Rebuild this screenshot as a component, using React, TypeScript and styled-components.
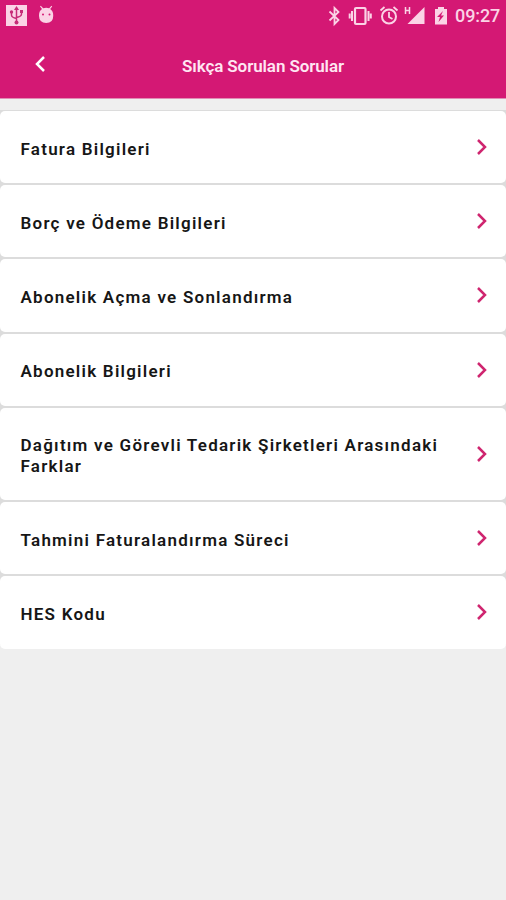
import React from "react";
import styled, { createGlobalStyle } from "styled-components";

const GlobalStyle = createGlobalStyle`
  body { margin: 0; background: #efefef; font-family: Roboto, "Liberation Sans", sans-serif; }
`;

const Screen = styled.div`
  display: flex;
  flex-direction: column;
  width: 506px;
  height: 900px;
  overflow: hidden;
  background: #efefef;
`;

const Top = styled.header`
  flex: none;
  box-sizing: border-box;
  height: 99px;
  border-bottom: 1px solid #e08db5;
  background: #d41874;
`;

const StatusBar = styled.div`
  display: flex;
  align-items: center;
  justify-content: space-between;
  height: 32px;
  color: #fbd3e6;
`;

const StatusIcons = styled.svg`
  display: block;
  flex: none;
`;

const StatusRight = styled.div`
  display: flex;
  align-items: center;
`;

const Clock = styled.span`
  width: 51px;
  font-size: 18px;
  font-weight: 500;
  line-height: 32px;
  letter-spacing: -0.1px;
  white-space: nowrap;
`;

const NavBar = styled.div`
  display: grid;
  grid-template-columns: 80px 1fr 60px;
  align-items: center;
  height: 66px;
`;

const BackButton = styled.button`
  display: flex;
  justify-content: center;
  padding: 0 0 2px;
  border: 0;
  background: none;
`;

const Title = styled.h1`
  margin: 1px 0 0;
  padding-left: 102px;
  color: #ffe6f2;
  font-size: 17px;
  font-weight: 600;
  line-height: 24px;
  letter-spacing: -0.1px;
  white-space: nowrap;
`;

const List = styled.main`
  display: flex;
  flex-direction: column;
  gap: 2px;
  margin-top: 11px;
  padding-top: 1px;
  background: linear-gradient(#dcdcdc, #dcdcdc) no-repeat 0 0 / 100% calc(100% - 4px);
`;

const Row = styled.button<{ $tall?: boolean }>`
  display: flex;
  align-items: center;
  justify-content: space-between;
  box-sizing: border-box;
  width: 100%;
  height: ${(p) => (p.$tall ? 92.4 : 72.2)}px;
  padding: 4.4px 18px 0 20.5px;
  border: 0;
  border-radius: 5px;
  background: #fff;
  font-family: inherit;
  text-align: left;
`;

const Label = styled.span`
  color: #161616;
  font-size: 17px;
  font-weight: 600;
  line-height: 21px;
  letter-spacing: 1.24px;
  white-space: pre-line;
`;

const Chevron = styled.svg`
  display: block;
  flex: none;
  margin-top: -4.4px;
`;

const items = [
  { text: "Fatura Bilgileri" },
  { text: "Borç ve Ödeme Bilgileri" },
  { text: "Abonelik Açma ve Sonlandırma" },
  { text: "Abonelik Bilgileri" },
  { text: "Dağıtım ve Görevli Tedarik Şirketleri Arasındaki\nFarklar", tall: true },
  { text: "Tahmini Faturalandırma Süreci" },
  { text: "HES Kodu" },
];

const NotificationIcons = () => (
  <StatusIcons width="60" height="32" viewBox="0 0 60 32" fill="currentColor">
    <rect x="6" y="5" width="21" height="21" />
    <g stroke="#c62c78" strokeWidth="1.5" fill="none">
      <path d="M16.5 8v14M11.5 12v3q0 2.5 5 3.5M21.5 11v3q0 2.5-5 3.5" />
    </g>
    <g fill="#c62c78">
      <path d="M16.5 6l2.5 4h-5z" />
      <circle cx="16.5" cy="22.5" r="2" />
      <circle cx="11.5" cy="12" r="1.7" />
      <rect x="20" y="10" width="3" height="3" />
    </g>
    <path d="M39 15q0-4 3-6l-2-2.500.8-.8 2.400 2.500q3-1 6 0l2.200-2.500.8.8-2 2.500q3 2 3 6v1q0 7-7 7t-7.200-7z" />
    <circle cx="43" cy="14.500" r="1" fill="#d41874" />
    <circle cx="49.500" cy="14.500" r="1" fill="#d41874" />
  </StatusIcons>
);

const SystemIcons = () => (
  <StatusIcons width="131" height="32" viewBox="324 0 131 32" fill="none" stroke="currentColor" strokeWidth="1.8">
    <path d="M329.5 11.500l9 8.500-4 4V8l4 4-9 8.500" />
    <rect x="355" y="8" width="10.500" height="16" rx="1" strokeWidth="2.200" />
    <path d="M352 11v10M368.500 11v10M349.700 13.500v5M370.800 13.500v5" strokeWidth="2" />
    <circle cx="389" cy="16.500" r="7" strokeWidth="2" />
    <path d="M389 12v5l3.500 2M380.500 10.500l4-3.500M397.500 10.500l-4-3.500" />
    <path d="M405.500 7v7M409.500 7v7M405.500 10.500h4" strokeWidth="1.500" />
    <path d="M424.500 7v17h-17z" fill="currentColor" stroke="none" />
    <path d="M438 7h6v2h3v15.500h-12V9h3z" fill="currentColor" stroke="none" />
    <path d="M443 11l-6 6h3l-1.500 5 5.500-6.500h-3z" fill="#d41874" stroke="none" />
  </StatusIcons>
);

export default function App() {
  return (
    <>
      <GlobalStyle />
      <Screen>
        <Top>
          <StatusBar>
            <NotificationIcons />
            <StatusRight>
              <SystemIcons />
              <Clock>09:27</Clock>
            </StatusRight>
          </StatusBar>
          <NavBar>
            <BackButton aria-label="Geri">
              <svg width="12" height="18" viewBox="0 0 12 18" fill="none" stroke="#fff" strokeWidth="2.5">
                <path d="M10 2L3 9l7 7" />
              </svg>
            </BackButton>
            <Title>Sıkça Sorulan Sorular</Title>
          </NavBar>
        </Top>
        <List>
          {items.map((item) => (
            <Row key={item.text} $tall={item.tall}>
              <Label>{item.text}</Label>
              <Chevron width="12" height="18" viewBox="0 0 12 18" fill="none" stroke="#cf256f" strokeWidth="2.5">
                <path d="M2 2l7 7-7 7" />
              </Chevron>
            </Row>
          ))}
        </List>
      </Screen>
    </>
  );
}
